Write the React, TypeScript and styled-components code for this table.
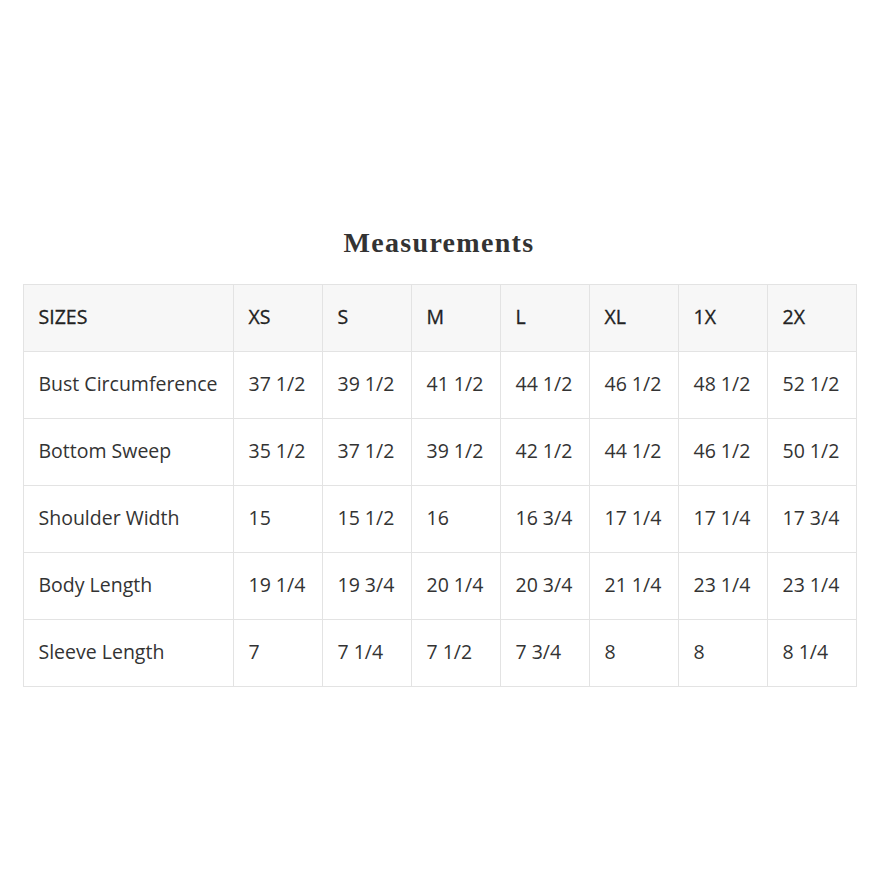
import styled, { createGlobalStyle } from 'styled-components';

const GlobalStyle = createGlobalStyle`
  html, body {
    margin: 0;
    padding: 0;
    background: #fff;
  }
`;

const Page = styled.div`
  width: 878px;
  height: 878px;
  display: flex;
  flex-direction: column;
  align-items: center;
  padding-top: 225px;
  box-sizing: border-box;
`;

const Title = styled.h2`
  margin: 0 0 23px 0;
  font-family: "Liberation Serif", "DejaVu Serif", serif;
  font-weight: bold;
  font-size: 28px;
  letter-spacing: 1.3px;
  color: #333;
  line-height: 36px;
`;

const Table = styled.table`
  border-collapse: collapse;
  table-layout: fixed;
  width: 834px;
  margin-left: 1px;
  font-family: "Open Sans", "Noto Sans", sans-serif;
  font-size: 19.5px;
  color: #333;
`;

const Cell = styled.td<{ $head?: boolean; $wide?: boolean }>`
  border: 1px solid #e3e3e3;
  height: 67px;
  padding: 0 0 3px 15px;
  box-sizing: border-box;
  width: ${(p) => (p.$wide ? '210px' : '89px')};
  background: ${(p) => (p.$head ? '#f7f7f7' : '#fff')};
  color: ${(p) => (p.$head ? '#222' : '#333')};
  -webkit-text-stroke: ${(p) => (p.$head ? '0.3px #222' : '0')};
  white-space: nowrap;
  text-align: left;
  vertical-align: middle;
`;

const sizes = ['XS', 'S', 'M', 'L', 'XL', '1X', '2X'];

const rows: [string, string[]][] = [
  ['Bust Circumference', ['37 1/2', '39 1/2', '41 1/2', '44 1/2', '46 1/2', '48 1/2', '52 1/2']],
  ['Bottom Sweep', ['35 1/2', '37 1/2', '39 1/2', '42 1/2', '44 1/2', '46 1/2', '50 1/2']],
  ['Shoulder Width', ['15', '15 1/2', '16', '16 3/4', '17 1/4', '17 1/4', '17 3/4']],
  ['Body Length', ['19 1/4', '19 3/4', '20 1/4', '20 3/4', '21 1/4', '23 1/4', '23 1/4']],
  ['Sleeve Length', ['7', '7 1/4', '7 1/2', '7 3/4', '8', '8', '8 1/4']],
];

export default function App() {
  return (
    <Page>
      <GlobalStyle />
      <Title>Measurements</Title>
      <Table>
        <tbody>
          <tr>
            <Cell $head $wide>SIZES</Cell>
            {sizes.map((s) => (
              <Cell $head key={s}>{s}</Cell>
            ))}
          </tr>
          {rows.map(([label, vals]) => (
            <tr key={label}>
              <Cell $wide>{label}</Cell>
              {vals.map((v, i) => (
                <Cell key={i}>{v}</Cell>
              ))}
            </tr>
          ))}
        </tbody>
      </Table>
    </Page>
  );
}
